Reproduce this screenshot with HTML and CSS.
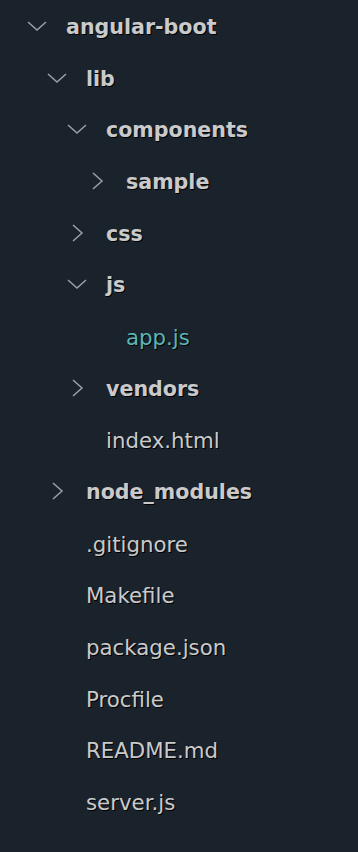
FILE: index.html
```html
<!DOCTYPE html>
<html>

<head>
  <title>angular-boot</title>
  <link rel="stylesheet" href="styles.css">
</head>

<body>
  <ul class="tree root">
    <li>
      <div class="row folder open"><span class="twisty"><svg viewBox="0 0 20 20"><polyline points="1,6 10,14 19,6"/></svg></span><span class="name">angular-boot</span></div>
      <ul class="tree">
        <li>
          <div class="row folder open"><span class="twisty"><svg viewBox="0 0 20 20"><polyline points="1,6 10,14 19,6"/></svg></span><span class="name">lib</span></div>
          <ul class="tree">
            <li>
              <div class="row folder open"><span class="twisty"><svg viewBox="0 0 20 20"><polyline points="1,6 10,14 19,6"/></svg></span><span class="name">components</span></div>
              <ul class="tree">
                <li>
                  <div class="row folder"><span class="twisty"><svg viewBox="0 0 20 20"><polyline points="6,2 15,10 6,18"/></svg></span><span class="name">sample</span></div>
                </li>
              </ul>
            </li>
            <li>
              <div class="row folder"><span class="twisty"><svg viewBox="0 0 20 20"><polyline points="6,2 15,10 6,18"/></svg></span><span class="name">css</span></div>
            </li>
            <li>
              <div class="row folder open"><span class="twisty"><svg viewBox="0 0 20 20"><polyline points="1,6 10,14 19,6"/></svg></span><span class="name">js</span></div>
              <ul class="tree">
                <li>
                  <div class="row file selected"><span class="twisty"></span><span class="name">app.js</span></div>
                </li>
              </ul>
            </li>
            <li>
              <div class="row folder"><span class="twisty"><svg viewBox="0 0 20 20"><polyline points="6,2 15,10 6,18"/></svg></span><span class="name">vendors</span></div>
            </li>
            <li>
              <div class="row file"><span class="twisty"></span><span class="name">index.html</span></div>
            </li>
          </ul>
        </li>
        <li>
          <div class="row folder"><span class="twisty"><svg viewBox="0 0 20 20"><polyline points="6,2 15,10 6,18"/></svg></span><span class="name">node_modules</span></div>
        </li>
        <li><div class="row file"><span class="twisty"></span><span class="name">.gitignore</span></div></li>
        <li><div class="row file"><span class="twisty"></span><span class="name">Makefile</span></div></li>
        <li><div class="row file"><span class="twisty"></span><span class="name">package.json</span></div></li>
        <li><div class="row file"><span class="twisty"></span><span class="name">Procfile</span></div></li>
        <li><div class="row file"><span class="twisty"></span><span class="name">README.md</span></div></li>
        <li><div class="row file"><span class="twisty"></span><span class="name">server.js</span></div></li>
      </ul>
    </li>
  </ul>
</body>

</html>
```

FILE: styles.css
```css
:root {
  --bg: #1a232b;
  --text: #cacaca;
  --accent: #5db5b5;
  --twisty: #9ba1a6;
}

* {
  box-sizing: border-box;
  margin: 0;
  padding: 0;
}

html,
body {
  background: var(--bg);
}

body {
  font-family: 'DejaVu Sans', 'Liberation Sans', sans-serif;
  color: var(--text);
  height: 852px;
  overflow: hidden;
}

.tree {
  list-style: none;
  padding-left: 20px;
}

.tree.root {
  padding-left: 26px;
}

.row {
  display: flex;
  align-items: center;
  height: 51.73px;
  white-space: nowrap;
}

.twisty {
  width: 40px;
  flex: none;
  display: flex;
  align-items: center;
}

.twisty svg {
  width: 20px;
  height: 20px;
  margin-left: 1px;
  fill: none;
  stroke: var(--twisty);
  stroke-width: 1.5;
}

.name {
  text-shadow: 1px 1px 0 #000;
  padding-top: 2px;
}

.folder .name {
  font-size: 20.6px;
  font-weight: bold;
}

.file .name {
  font-size: 21.3px;
}

.file.selected .name {
  color: var(--accent);
}
```
